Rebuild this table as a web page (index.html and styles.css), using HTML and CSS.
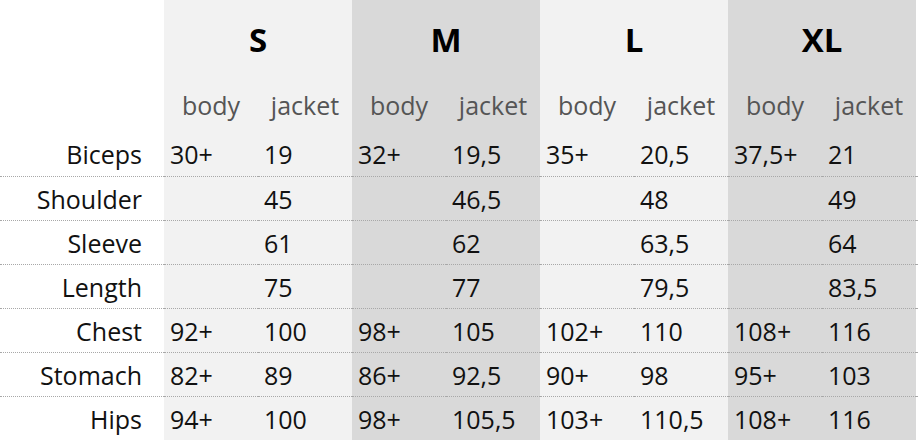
FILE: index.html
```html
<!DOCTYPE html>
<html>
<head>
<meta charset="utf-8">
<link rel="stylesheet" href="styles.css">
</head>
<body>
<table class="sizes">
  <colgroup>
    <col class="c-label">
    <col class="c-num"><col class="c-num">
    <col class="c-num"><col class="c-num">
    <col class="c-num"><col class="c-num">
    <col class="c-num"><col class="c-num">
    <col class="c-fill">
  </colgroup>
  <thead>
    <tr class="size-row">
      <th></th>
      <th colspan="2" class="light">S</th>
      <th colspan="2" class="dark">M</th>
      <th colspan="2" class="light">L</th>
      <th colspan="2" class="dark">XL</th>
      <th></th>
    </tr>
    <tr class="sub-row">
      <th></th>
      <th class="light">body</th><th class="light">jacket</th>
      <th class="dark">body</th><th class="dark">jacket</th>
      <th class="light">body</th><th class="light">jacket</th>
      <th class="dark">body</th><th class="dark">jacket</th>
      <th></th>
    </tr>
  </thead>
  <tbody>
    <tr class="first">
      <td class="label">Biceps</td>
      <td class="light">30+</td><td class="light">19</td>
      <td class="dark">32+</td><td class="dark">19,5</td>
      <td class="light">35+</td><td class="light">20,5</td>
      <td class="dark">37,5+</td><td class="dark">21</td>
      <td></td>
    </tr>
    <tr>
      <td class="label">Shoulder</td>
      <td class="light"></td><td class="light">45</td>
      <td class="dark"></td><td class="dark">46,5</td>
      <td class="light"></td><td class="light">48</td>
      <td class="dark"></td><td class="dark">49</td>
      <td></td>
    </tr>
    <tr>
      <td class="label">Sleeve</td>
      <td class="light"></td><td class="light">61</td>
      <td class="dark"></td><td class="dark">62</td>
      <td class="light"></td><td class="light">63,5</td>
      <td class="dark"></td><td class="dark">64</td>
      <td></td>
    </tr>
    <tr>
      <td class="label">Length</td>
      <td class="light"></td><td class="light">75</td>
      <td class="dark"></td><td class="dark">77</td>
      <td class="light"></td><td class="light">79,5</td>
      <td class="dark"></td><td class="dark">83,5</td>
      <td></td>
    </tr>
    <tr>
      <td class="label">Chest</td>
      <td class="light">92+</td><td class="light">100</td>
      <td class="dark">98+</td><td class="dark">105</td>
      <td class="light">102+</td><td class="light">110</td>
      <td class="dark">108+</td><td class="dark">116</td>
      <td></td>
    </tr>
    <tr>
      <td class="label">Stomach</td>
      <td class="light">82+</td><td class="light">89</td>
      <td class="dark">86+</td><td class="dark">92,5</td>
      <td class="light">90+</td><td class="light">98</td>
      <td class="dark">95+</td><td class="dark">103</td>
      <td></td>
    </tr>
    <tr>
      <td class="label">Hips</td>
      <td class="light">94+</td><td class="light">100</td>
      <td class="dark">98+</td><td class="dark">105,5</td>
      <td class="light">103+</td><td class="light">110,5</td>
      <td class="dark">108+</td><td class="dark">116</td>
      <td></td>
    </tr>
  </tbody>
</table>
</body>
</html>
```

FILE: styles.css
```css
html, body {
  margin: 0;
  padding: 0;
  background: #ffffff;
}

.sizes {
  border-collapse: collapse;
  border-spacing: 0;
  table-layout: fixed;
  width: 918px;
  font-family: "Open Sans", "Liberation Sans", sans-serif;
  font-size: 25px;
  color: #111111;
}

.c-label { width: 164px; }
.c-num { width: 94px; }
.c-fill { width: 2px; }

.sizes th,
.sizes td {
  padding: 0;
  overflow: visible;
  white-space: nowrap;
}

.light { background: #f2f2f2; }
.dark { background: #d9d9d9; }

.size-row th {
  height: 78px;
  font-size: 33px;
  font-weight: 700;
  color: #000000;
  text-align: center;
  vertical-align: middle;
}

.sub-row th {
  height: 54px;
  font-weight: 400;
  color: #555555;
  text-align: center;
  vertical-align: middle;
}

.sizes tbody td {
  height: 43px;
  vertical-align: middle;
  text-align: left;
  padding-left: 6px;
  border-top: 1px dotted #a8a8a8;
}

.sizes tbody tr.first td {
  border-top: none;
  height: 44px;
}

.sizes tbody td.label {
  text-align: right;
  padding-left: 0;
  padding-right: 22px;
}
```
